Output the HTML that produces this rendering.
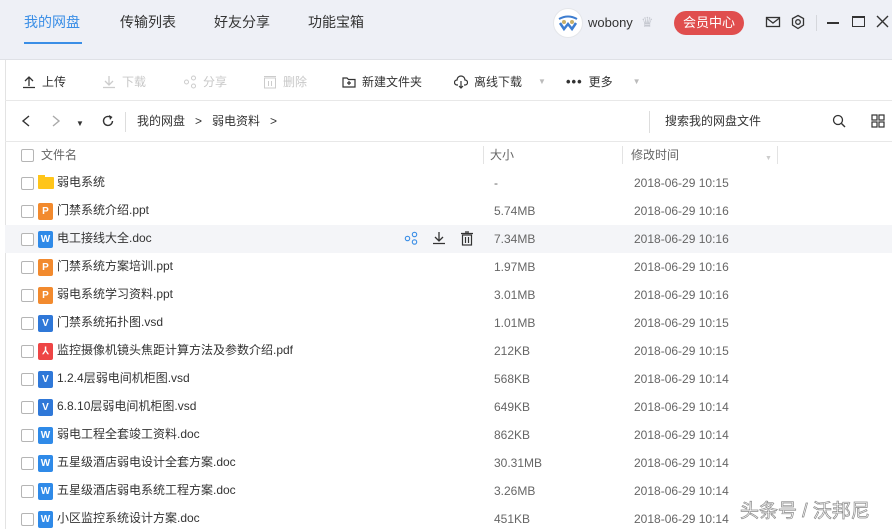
<!DOCTYPE html>
<html><head><meta charset="utf-8"><style>
*{margin:0;padding:0;box-sizing:border-box}
body{width:892px;height:529px;overflow:hidden;background:#fff;font-family:"Liberation Sans","Noto Sans CJK SC",sans-serif;font-size:12px;line-height:16px;color:#333;position:relative}
.abs{position:absolute}
.hdr{left:0;top:0;width:892px;height:60px;background:#eef0f6;border-bottom:1px solid #dfe1e6}
.tab{top:13px;font-size:14px;line-height:18px;color:#333}
.tb{top:60px;left:5px;width:887px;height:41px;border-bottom:1px solid #e8e8e8}
.ti{top:74px;font-size:12px;color:#333;display:flex;align-items:center;gap:6px}
.dis{color:#c8c8c8}
.row{left:5px;width:887px;height:28px}
.cb{left:21px;width:13px;height:13px;border:1px solid #b5b5b5;border-radius:2px;background:#fff}
.ic{left:38px;width:15px;height:17px;border-radius:2px;color:#fff;font-size:10px;font-weight:bold;text-align:center;line-height:17px}
.nm{left:57px;font-size:12px;color:#333}
.sz{left:494px;color:#666}
.dt{left:634px;color:#666}
</style></head><body>
<div class="abs hdr"></div>
<div class="abs tab" style="left:24px;color:#3a8ee6">我的网盘</div>
<div class="abs" style="left:24px;top:42px;width:58px;height:2px;background:#3a8ee6"></div>
<div class="abs tab" style="left:120px">传输列表</div>
<div class="abs tab" style="left:214px">好友分享</div>
<div class="abs tab" style="left:308px">功能宝箱</div>
<div class="abs" style="left:553px;top:8px;width:30px;height:30px;border-radius:50%;background:#fff;border:1px solid #e4e6ea"><svg width="28" height="28" viewBox="0 0 28 28"><path d="M5 10 Q14 5 23 10" stroke="#3d7dd0" stroke-width="2" fill="none"/><path d="M6 14 L10 20 L14 15 L18 20 L22 14" stroke="#3d7dd0" stroke-width="2.5" fill="none"/><circle cx="10" cy="13" r="2" fill="#c8b06a"/><circle cx="18" cy="13" r="2" fill="#c8b06a"/></svg></div>
<div class="abs" style="left:588px;top:15px;font-size:13px;color:#333">wobony</div>
<div class="abs" style="left:641px;top:14px;color:#c5c8d0;font-size:14px">♛</div>
<div class="abs" style="left:674px;top:11px;width:70px;height:24px;border-radius:12px;background:#e04e4e;color:#fff;font-size:13px;text-align:center;line-height:24px">会员中心</div>
<svg class="abs" style="left:765px;top:15px" width="16" height="14"><rect x="1.5" y="2.5" width="13" height="9" fill="none" stroke="#333" stroke-width="1.3"/><path d="M1.5 3 L8 8 L14.5 3" fill="none" stroke="#333" stroke-width="1.3"/></svg>
<svg class="abs" style="left:790px;top:14px" width="16" height="16"><path d="M8 1.5 L13.5 4.5 V11 L8 14.5 L2.5 11 V4.5 Z" fill="none" stroke="#333" stroke-width="1.3"/><circle cx="8" cy="8" r="2.3" fill="none" stroke="#333" stroke-width="1.3"/></svg>
<div class="abs" style="left:816px;top:15px;width:1px;height:16px;background:#d5d7dc"></div>
<div class="abs" style="left:827px;top:22px;width:12px;height:1.5px;background:#333"></div>
<div class="abs" style="left:852px;top:16px;width:13px;height:11px;border:1.3px solid #333;border-top-width:2.5px"></div>
<svg class="abs" style="left:876px;top:15px" width="13" height="13"><path d="M1 1 L12 12 M12 1 L1 12" stroke="#333" stroke-width="1.4"/></svg>

<div class="abs" style="left:5px;top:60px;width:1px;height:469px;background:#e3e3e3"></div>
<div class="abs tb"></div>
<div class="abs ti" style="left:22px"><svg width="14" height="14"><path d="M7 11 V2 M3 6 L7 2 L11 6 M1 12.5 H13" stroke="#333" stroke-width="1.3" fill="none"/></svg>上传</div>
<div class="abs ti dis" style="left:102px"><svg width="14" height="14"><path d="M7 1 V10 M3 6 L7 10 L11 6 M1 12.5 H13" stroke="#ccc" stroke-width="1.3" fill="none"/></svg>下载</div>
<div class="abs ti dis" style="left:183px"><svg width="14" height="14"><circle cx="3.5" cy="7" r="2" stroke="#ccc" fill="none"/><circle cx="10.5" cy="3" r="2" stroke="#ccc" fill="none"/><circle cx="10.5" cy="11" r="2" stroke="#ccc" fill="none"/></svg>分享</div>
<div class="abs ti dis" style="left:263px"><svg width="14" height="14"><rect x="1.5" y="3" width="11" height="10" stroke="#ccc" fill="none"/><path d="M1 1.5H13M5.5 6v5M8.5 6v5" stroke="#ccc"/></svg>删除</div>
<div class="abs ti" style="left:342px"><svg width="14" height="14"><path d="M1 3 H5 L6.5 4.5 H13 V12 H1 Z M7 6 V10 M5 8 H9" stroke="#333" stroke-width="1.2" fill="none"/></svg>新建文件夹</div>
<div class="abs ti" style="left:454px"><svg width="14" height="14"><path d="M4 10 H3 A2.5 2.5 0 0 1 3 5 A4 4 0 0 1 11 5 A2.5 2.5 0 0 1 11 10 H10 M7 6 V13 M5 11 L7 13 L9 11" stroke="#333" stroke-width="1.2" fill="none"/></svg>离线下载<span style="color:#bbb;font-size:8px;margin-left:10px">▼</span></div>
<div class="abs ti" style="left:566px"><span style="font-weight:bold;letter-spacing:1px;font-size:13px">•••</span>更多<span style="color:#bbb;font-size:8px;margin-left:14px">▼</span></div>

<div class="abs" style="left:5px;top:101px;width:887px;height:41px;border-bottom:1px solid #e8e8e8"></div>
<svg class="abs" style="left:20px;top:114px" width="12" height="14"><path d="M9 2 L3 7 L9 12" stroke="#333" stroke-width="1.4" fill="none"/></svg>
<svg class="abs" style="left:50px;top:114px" width="12" height="14"><path d="M3 2 L9 7 L3 12" stroke="#aaa" stroke-width="1.4" fill="none"/></svg>
<div class="abs" style="left:76px;top:116px;font-size:8px">▼</div>
<svg class="abs" style="left:101px;top:114px" width="14" height="14"><path d="M11.5 7 A4.5 4.5 0 1 1 9.5 3.2" stroke="#333" stroke-width="1.4" fill="none"/><path d="M8 1 L11.5 3 L9 6" fill="#333"/></svg>
<div class="abs" style="left:125px;top:112px;width:1px;height:20px;background:#ddd"></div>
<div class="abs" style="left:137px;top:113px">我的网盘 &nbsp;&nbsp;&gt;&nbsp;&nbsp; 弱电资料 &nbsp;&nbsp;&gt;</div>
<div class="abs" style="left:649px;top:111px;width:1px;height:22px;background:#ddd"></div>
<div class="abs" style="left:665px;top:113px">搜索我的网盘文件</div>
<svg class="abs" style="left:832px;top:114px" width="14" height="14"><circle cx="6" cy="6" r="4.5" stroke="#333" stroke-width="1.3" fill="none"/><path d="M9.5 9.5 L13 13" stroke="#333" stroke-width="1.4"/></svg>
<svg class="abs" style="left:871px;top:114px" width="14" height="14"><g stroke="#333" stroke-width="1.2" fill="none"><rect x="1" y="1" width="5" height="5"/><rect x="8" y="1" width="5" height="5"/><rect x="1" y="8" width="5" height="5"/><rect x="8" y="8" width="5" height="5"/></g></svg>

<div class="abs cb" style="top:149px"></div>
<div class="abs" style="left:41px;top:147px;color:#666">文件名</div>
<div class="abs" style="left:483px;top:146px;width:1px;height:18px;background:#e3e3e3"></div>
<div class="abs" style="left:490px;top:147px;color:#666">大小</div>
<div class="abs" style="left:622px;top:146px;width:1px;height:18px;background:#e3e3e3"></div>
<div class="abs" style="left:631px;top:147px;color:#666">修改时间</div>
<div class="abs" style="left:765px;top:151px;color:#ccc;font-size:7px">▼</div>
<div class="abs" style="left:777px;top:146px;width:1px;height:18px;background:#e3e3e3"></div>

<div class="abs row" style="top:225px;background:#f4f5f8"></div>
<svg class="abs" style="left:404px;top:231px" width="14" height="14"><g stroke="#3a8ee6" stroke-width="1.1" fill="none"><circle cx="3.5" cy="7.5" r="2.2"/><circle cx="10.5" cy="3.5" r="2.2"/><circle cx="10.5" cy="11" r="2.2"/></g></svg>
<svg class="abs" style="left:432px;top:231px" width="14" height="14"><path d="M7 1 V10 M3 6 L7 10 L11 6 M1 12.5 H13" stroke="#333" stroke-width="1.3" fill="none"/></svg>
<svg class="abs" style="left:460px;top:231px" width="14" height="15"><path d="M1 2.5H13M5 1H9" stroke="#333" stroke-width="1.2"/><rect x="2.5" y="4" width="9" height="10" stroke="#333" stroke-width="1.2" fill="none"/><path d="M5.5 6v6M8.5 6v6" stroke="#333" stroke-width="1.2"/></svg>

<div id="rows"></div>
<div class="abs" style="left:740px;top:500px;font-size:19px;line-height:24px;color:#fff;-webkit-text-stroke:0.7px #8a8a8a">头条号 / 沃邦尼</div>
<script>
var d=[["f","弱电系统","-","10:15"],["p","门禁系统介绍.ppt","5.74MB","10:16"],["w","电工接线大全.doc","7.34MB","10:16"],["p","门禁系统方案培训.ppt","1.97MB","10:16"],["p","弱电系统学习资料.ppt","3.01MB","10:16"],["v","门禁系统拓扑图.vsd","1.01MB","10:15"],["a","监控摄像机镜头焦距计算方法及参数介绍.pdf","212KB","10:15"],["v","1.2.4层弱电间机柜图.vsd","568KB","10:14"],["v","6.8.10层弱电间机柜图.vsd","649KB","10:14"],["w","弱电工程全套竣工资料.doc","862KB","10:14"],["w","五星级酒店弱电设计全套方案.doc","30.31MB","10:14"],["w","五星级酒店弱电系统工程方案.doc","3.26MB","10:14"],["w","小区监控系统设计方案.doc","451KB","10:14"]];
var h="";d.forEach(function(r,i){var t=169+28*i;var c=t+14;
h+='<div class="abs cb" style="top:'+(c-6)+'px"></div>';
var ic;if(r[0]=="f")ic='<div class="abs" style="left:38px;top:'+(c-6)+'px;width:16px;height:12px;background:#ffc519;border-radius:1px"></div><div class="abs" style="left:38px;top:'+(c-8)+'px;width:7px;height:3px;background:#ffc519"></div>';
else{var col={p:"#f28a2e",w:"#2f8ae8",v:"#2f78d8",a:"#ee4545"}[r[0]];var L={p:"P",w:"W",v:"V",a:"⅄"}[r[0]];ic='<div class="abs ic" style="top:'+(c-8)+'px;background:'+col+'">'+L+'</div>';}
h+=ic+'<div class="abs nm" style="top:'+(c-9)+'px">'+r[1]+'</div><div class="abs sz" style="top:'+(c-8)+'px">'+r[2]+'</div><div class="abs dt" style="top:'+(c-8)+'px">2018-06-29 '+r[3]+'</div>';});
document.getElementById("rows").innerHTML=h;
</script>
</body></html>
